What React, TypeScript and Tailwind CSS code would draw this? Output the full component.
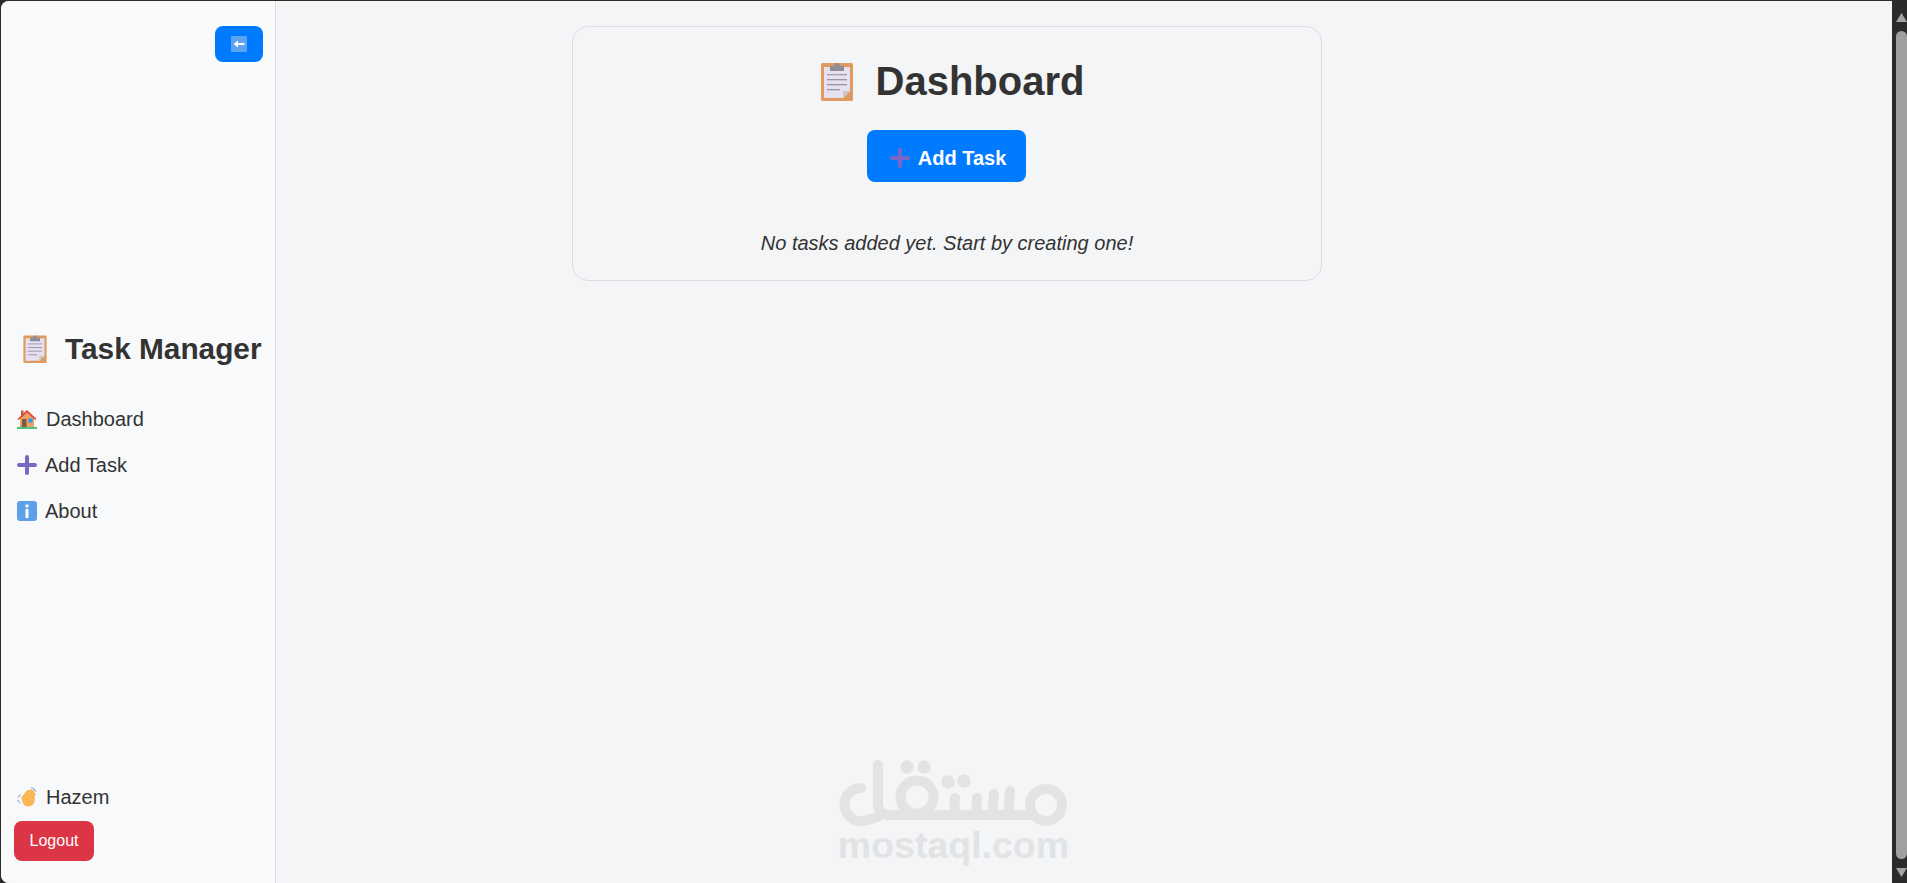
const ClipboardIcon = ({ className }: { className: string }) => (
  <svg viewBox="0 0 32 40" className={className}>
    <rect x="0" y="2" width="32" height="38" rx="1.500" fill="#e09a5f" />
    <path d="M3 6h26v24l-7 7H3z" fill="#e6e0f0" />
    <path d="M29 30l-7 7v-6a1 1 0 0 1 1-1z" fill="#c9c4cc" />
    <path d="M9 5h4a3 3 0 0 1 6 0h4v5H9z" fill="#8e8e96" />
    <rect x="6" y="13" width="20" height="1.300" fill="#a49bb0" />
    <rect x="6" y="18" width="20" height="1.300" fill="#9a96a0" />
    <rect x="6" y="23" width="20" height="1.300" fill="#9a96a0" />
    <rect x="6" y="28" width="13" height="1.300" fill="#9a96a0" />
  </svg>
);

const PlusIcon = ({ className }: { className: string }) => (
  <svg viewBox="0 0 20 20" className={className}>
    <path d="M8 2a2 2 0 0 1 4 0v6h6a2 2 0 0 1 0 4h-6v6a2 2 0 0 1-4 0v-6H2a2 2 0 0 1 0-4h6z" fill="#7b66c4" />
  </svg>
);

const HouseIcon = () => (
  <svg viewBox="0 0 20 20" className="h-5 w-5 shrink-0">
    <rect x="4" y="1.500" width="2.500" height="5" fill="#b5603c" />
    <path d="M3 9l7-6 7 6v9H3z" fill="#e9a263" />
    <path d="M0.500 10L10 1l9.500 9-1.200 1L10 3.500 1.700 11z" fill="#e5413c" />
    <rect x="5" y="10" width="4.500" height="8" fill="#7a5a48" />
    <rect x="11.500" y="9.500" width="4" height="4" fill="#2b9bea" />
    <rect y="18" width="20" height="2" fill="#4cc47a" />
  </svg>
);

const InfoIcon = () => (
  <svg viewBox="0 0 20 20" className="h-5 w-5 shrink-0">
    <rect width="20" height="20" rx="3" fill="#5d9fe8" />
    <rect x="8.500" y="8" width="3" height="9" fill="#fff" />
    <circle cx="10" cy="5" r="1.700" fill="#fff" />
  </svg>
);

const WaveIcon = () => (
  <svg viewBox="0 0 20 20" className="h-5 w-5 shrink-0">
    <g fill="none" stroke="#fbb655" strokeLinecap="round" strokeWidth="3.200">
      <path d="M6 11l5-6.500M8.500 12l5-8M11.500 12l4-7.500M14.500 13l2.500-6" />
    </g>
    <path d="M4.500 10.500l13-1c1 6-1.500 10-6.500 10-3.500 0-6-3-6.500-9z" fill="#fbb655" />
    <path d="M14 .8c2.200 0 4 1.500 4.800 4M1 13c.3 1.500 1 2.500 2.500 3M3.500 7.500L1 10.500" fill="none" stroke="#5a9fe0" strokeWidth="1" />
  </svg>
);

const BackIcon = () => (
  <svg viewBox="0 0 16 16" className="h-4 w-4">
    <rect width="16" height="16" rx="1" fill="#5ea2f2" />
    <path d="M2.500 8L7 4.500V7h6.500v2H7v2.500z" fill="#fff" />
  </svg>
);

const MostaqlLogo = () => (
  <svg viewBox="0 0 235 80" className="h-20 w-[235px]">
    <g fill="none" stroke="#e2e3e5" strokeWidth="10" strokeLinecap="round">
      <path d="M26 33a16.500 16.500 0 0 0 0 33c8 0 14-3 20-6" />
      <path d="M43 10v38q0 12 12 12h142" />
      <circle cx="82" cy="42" r="16.500" />
      <path d="M119 60l1-17M141 60l1-17M157 60l2-21M173 60l2-24" />
      <circle cx="211" cy="50" r="16" />
    </g>
    <g fill="#e2e3e5">
      <circle cx="72" cy="12" r="6.700" />
      <circle cx="89" cy="12" r="6.700" />
      <circle cx="113" cy="27" r="6.700" />
      <circle cx="129" cy="26" r="6.700" />
    </g>
  </svg>
);

const navLinks = [
  { label: "Dashboard", icon: <HouseIcon />, gap: "gap-[9px]" },
  { label: "Add Task", icon: <PlusIcon className="h-5 w-5 shrink-0" />, gap: "gap-2" },
  { label: "About", icon: <InfoIcon />, gap: "gap-2" },
];

export default function App() {
  return (
    <div className="relative flex h-[883px] overflow-hidden bg-[#2b2b2b] pt-px pl-px font-['Liberation_Sans',Arial,sans-serif] text-[#333]">
      <div className="flex flex-1 overflow-hidden rounded-l-lg bg-[#f3f5f7]">
        <aside className="flex w-[275px] shrink-0 flex-col border-r border-[#dcdde0] bg-[#f8f9fa] pt-[25px] pr-3 pb-[22px] pl-[13px]">
          <button className="flex h-9 w-12 shrink-0 items-center justify-center self-end rounded-lg bg-[#007bff]">
            <BackIcon />
          </button>
          <div className="flex flex-1 flex-col justify-center pt-[6px] pb-[1px]">
            <h2 className="flex items-center gap-[18px] pl-[9px] text-[29.8px] leading-[34px] font-bold whitespace-nowrap">
              <ClipboardIcon className="h-[29px] w-6 shrink-0" />
              Task Manager
            </h2>
            <nav className="mt-[42px] flex flex-col gap-[24px] pl-[3px]">
              {navLinks.map((link) => (
                <a key={link.label} className={`flex h-[22px] items-center text-[20px] ${link.gap}`}>
                  {link.icon}
                  {link.label}
                </a>
              ))}
            </nav>
          </div>
          <div className="flex flex-col">
            <div className="flex h-[22px] items-center gap-[9px] pl-[3px] text-[20px]">
              <WaveIcon />
              Hazem
            </div>
            <button className="mt-[13px] h-10 w-20 rounded-lg bg-[#dc3545] text-base text-white">Logout</button>
          </div>
        </aside>

        <main className="flex-1">
          <section className="mt-[25px] ml-[296px] flex h-[255px] w-[750px] flex-col items-center rounded-2xl border border-[#dcdde0] pt-[29px]">
            <h1 className="flex h-[50px] items-center gap-[23px] pl-[11px] text-[40px] font-bold">
              <ClipboardIcon className="h-10 w-8 shrink-0" />
              Dashboard
            </h1>
            <button className="mt-[24px] mr-[2px] flex h-[52px] w-[159px] items-center justify-center gap-2 rounded-lg bg-[#007bff] pt-[3px] pl-[4px] text-[20px] font-bold text-white">
              <PlusIcon className="h-5 w-5 shrink-0" />
              Add Task
            </button>
            <p className="mt-[46px] text-[20px] italic">No tasks added yet. Start by creating one!</p>
          </section>
        </main>
      </div>

      <div className="flex w-[15px] shrink-0 flex-col items-center bg-[#2b2b2b] pt-[12px] pb-[6px] pl-[4px]">
        <svg viewBox="0 0 11 9" className="h-[9px] w-[11px] shrink-0">
          <path d="M5.500 0L11 9H0z" fill="#a3a3a3" />
        </svg>
        <div className="my-[9px] w-[11px] flex-1 rounded-t-full rounded-b-full bg-[#9f9f9f]" />
        <svg viewBox="0 0 11 9" className="h-[9px] w-[11px] shrink-0">
          <path d="M0 0h11L5.500 9z" fill="#a3a3a3" />
        </svg>
      </div>

      {/* watermark sits over the page */}
      <div className="absolute top-[755px] left-[835px] flex w-[235px] flex-col items-center">
        <MostaqlLogo />
        <span className="-mt-[12px] ml-[2px] text-[37.5px] leading-[45px] font-bold whitespace-nowrap text-[#e2e3e5]">mostaql.com</span>
      </div>
    </div>
  );
}
